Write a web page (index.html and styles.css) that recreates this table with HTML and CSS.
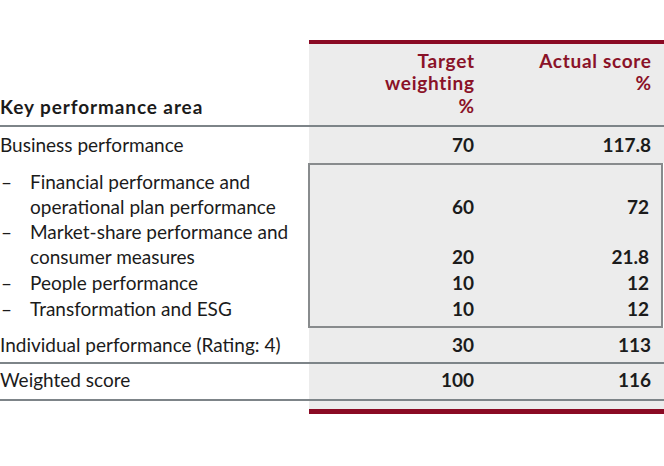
FILE: index.html
```html
<!DOCTYPE html>
<html lang="en">
<head>
<meta charset="utf-8">
<title>Key performance areas</title>
<link rel="stylesheet" href="styles.css">
</head>
<body>
<div class="kpi">
  <div class="row head">
    <div class="label">Key performance area</div>
    <div class="num">Target<br>weighting<br>%</div>
    <div class="num">Actual score<br>%</div>
  </div>
  <div class="row main">
    <div class="label">Business performance</div>
    <div class="num">70</div>
    <div class="num">117.8</div>
  </div>
  <div class="detail">
    <div class="row sub first">
      <div class="item">Financial performance and operational plan performance</div>
      <div class="num">60</div>
      <div class="num">72</div>
    </div>
    <div class="row sub">
      <div class="item">Market-share performance and consumer measures</div>
      <div class="num">20</div>
      <div class="num">21.8</div>
    </div>
    <div class="row sub loose">
      <div class="item">People performance</div>
      <div class="num">10</div>
      <div class="num">12</div>
    </div>
    <div class="row sub loose last">
      <div class="item">Transformation and ESG</div>
      <div class="num">10</div>
      <div class="num">12</div>
    </div>
  </div>
  <div class="row indiv">
    <div class="label">Individual performance (Rating: 4)</div>
    <div class="num">30</div>
    <div class="num">113</div>
  </div>
  <div class="row total">
    <div class="label">Weighted score</div>
    <div class="num">100</div>
    <div class="num">116</div>
  </div>
  <div class="row foot">
    <div class="label"></div>
    <div class="end"></div>
  </div>
</div>
</body>
</html>
```
FILE: styles.css
```css
html, body {
  margin: 0;
  padding: 0;
  background: #ffffff;
}

body {
  font-family: "Lato", "Liberation Sans", sans-serif;
  font-size: 19px;
  color: #1b1b1b;
}

.kpi {
  width: 664px;
  margin-top: 40px;
}

.row {
  display: grid;
  grid-template-columns: 309px 178px 177px;
  line-height: 25px;
}

.num {
  background: #ececec;
  text-align: right;
  padding-right: 13px;
  font-weight: 700;
}

/* header */
.head {
  line-height: 22.5px;
  border-bottom: 2px solid #7d8488;
}

.head .label {
  font-weight: 700;
  letter-spacing: 0.9px;
  align-self: end;
  padding-bottom: 7px;
}

.head .num {
  color: #8a1228;
  letter-spacing: 0.7px;
  padding-right: 12.3px;
  border-top: 4px solid #8a0a24;
  padding-top: 5.5px;
  padding-bottom: 8px;
}

/* business performance */
.main .label,
.main .num {
  padding-top: 5px;
  padding-bottom: 6px;
}

/* sub items inside the bordered box */
.sub .num {
  display: flex;
  align-items: flex-end;
  justify-content: flex-end;
}

.sub .num:nth-child(2) {
  border-left: 2px solid #888b8d;
  margin-left: -1px;
}

.sub .num:nth-child(3) {
  border-right: 2px solid #888b8d;
  margin-right: 1px;
  padding-right: 12px;
}

.loose .item,
.loose .num {
  padding-top: 1px;
}

.first .item,
.first .num {
  padding-top: 6px;
}

.first .num {
  border-top: 2px solid #888b8d;
  padding-top: 4px;
}

.last .item,
.last .num {
  padding-bottom: 7px;
}

.last .num {
  border-bottom: 2px solid #888b8d;
  padding-bottom: 5px;
}

.item {
  padding-left: 30px;
  text-indent: -30px;
}

.item::before {
  content: "\2013";
  display: inline-block;
  width: 30px;
  text-indent: 0;
  padding-left: 1px;
  box-sizing: border-box;
}

/* individual */
.indiv {
  border-bottom: 2px solid #7d8488;
}

.indiv .label,
.indiv .num {
  padding-top: 4px;
  padding-bottom: 5px;
}

/* weighted */
.total {
  border-bottom: 2px solid #7d8488;
}

.total .label,
.total .num {
  padding-top: 3px;
  padding-bottom: 7px;
}

/* footer bar */
.foot .end {
  grid-column: 2 / 4;
  height: 8px;
  background: #ececec;
  border-bottom: 5px solid #8a0a24;
}
```
